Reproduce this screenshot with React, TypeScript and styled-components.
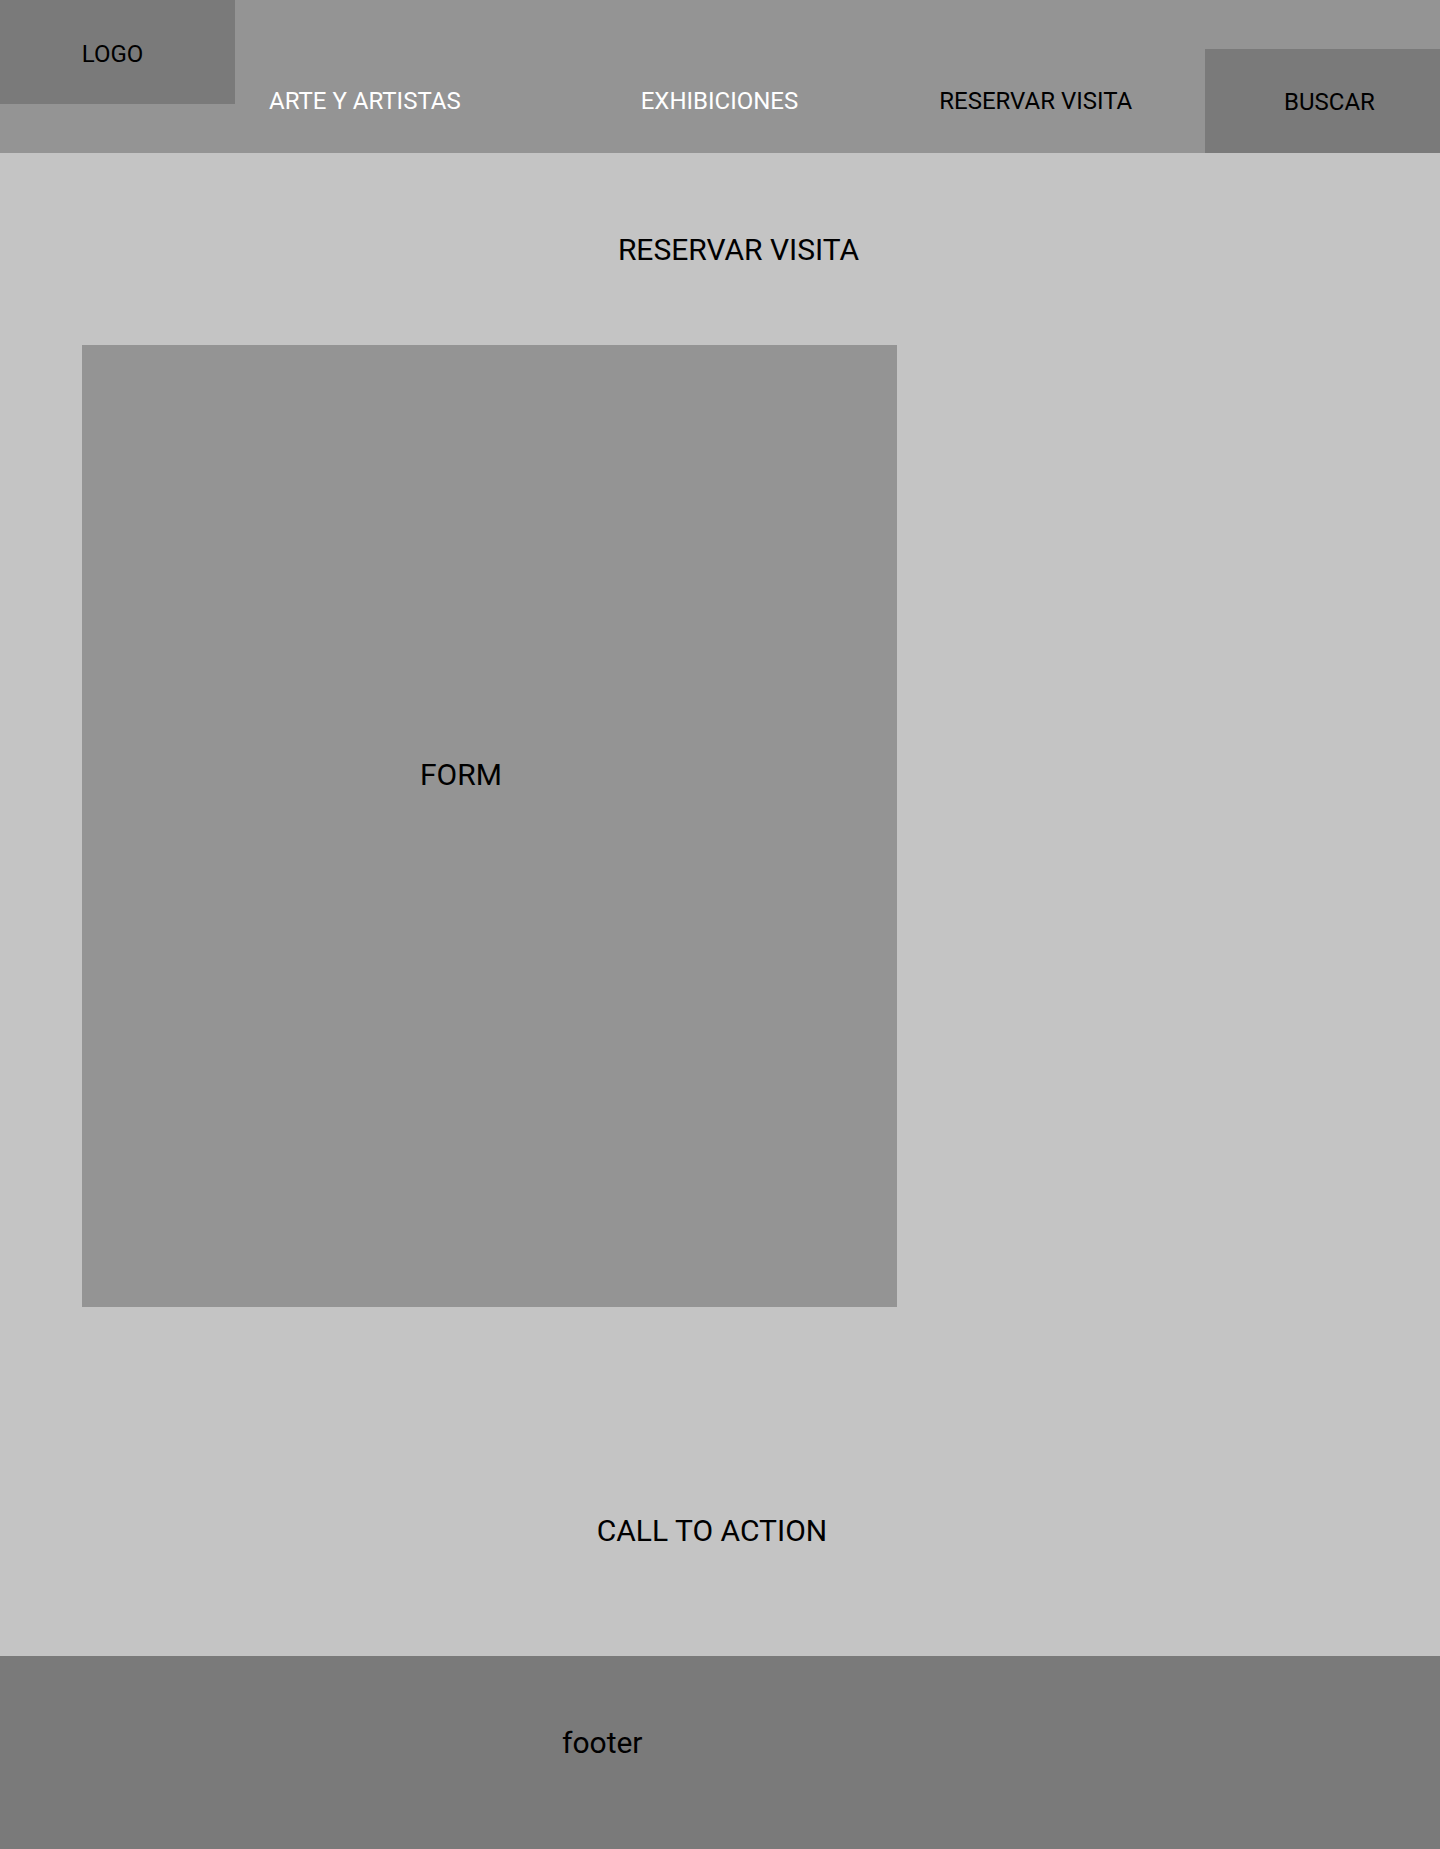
import React from "react";
import styled, { createGlobalStyle } from "styled-components";

const GlobalStyle = createGlobalStyle`
  html, body {
    margin: 0;
    padding: 0;
    background: #c4c4c4;
  }
  body {
    font-family: Roboto, "Liberation Sans", Arial, sans-serif;
    color: #000;
  }
  * { box-sizing: border-box; }
`;

const Page = styled.div`
  display: flex;
  flex-direction: column;
  width: 1440px;
  min-height: 1849px;
`;

const Header = styled.header`
  display: flex;
  align-items: flex-start;
  height: 153px;
  background: #949494;
`;

const LogoBox = styled.div`
  display: flex;
  align-items: center;
  justify-content: center;
  width: 235px;
  height: 104px;
  background: #7a7a7a;
  font-size: 24px;
  color: #000;
  padding-right: 10px;
  padding-top: 3px;
`;

const NavLink = styled.a<{ $offset: number; $light?: boolean }>`
  margin-left: ${(p) => p.$offset}px;
  margin-top: 87px;
  font-size: 24px;
  line-height: 28px;
  white-space: nowrap;
  color: ${(p) => (p.$light ? "#ffffff" : "#000000")};
  text-decoration: none;
  cursor: pointer;
`;

const SearchBox = styled.div`
  display: flex;
  align-items: center;
  justify-content: center;
  margin-left: auto;
  margin-top: 49px;
  width: 235px;
  height: 104px;
  background: #7a7a7a;
  font-size: 24px;
  padding-left: 14px;
  padding-top: 2px;
`;

const Main = styled.main`
  display: flex;
  flex-direction: column;
  height: 1503px;
  background: #c4c4c4;
`;

const Title = styled.h1`
  margin: 79px 0 0;
  padding-left: 37px;
  text-align: center;
  font-size: 30px;
  font-weight: 400;
  line-height: 35px;
`;

const FormPanel = styled.section`
  margin: 78px 0 0 82px;
  width: 815px;
  height: 962px;
  background: #949494;
  padding: 412px 0 0 338px;
  font-size: 30px;
  line-height: 35px;
`;

const CallToAction = styled.div`
  margin-top: 206px;
  padding-right: 16px;
  text-align: center;
  font-size: 30px;
  line-height: 35px;
`;

const Footer = styled.footer`
  height: 193px;
  background: #7a7a7a;
  padding: 69px 0 0 562px;
  font-size: 30px;
  line-height: 35px;
`;

export default function App() {
  return (
    <>
      <GlobalStyle />
      <Page>
        <Header>
          <LogoBox>LOGO</LogoBox>
          <NavLink $offset={34} $light>
            ARTE Y ARTISTAS
          </NavLink>
          <NavLink $offset={180} $light>
            EXHIBICIONES
          </NavLink>
          <NavLink $offset={141}>RESERVAR VISITA</NavLink>
          <SearchBox>BUSCAR</SearchBox>
        </Header>
        <Main>
          <Title>RESERVAR VISITA</Title>
          <FormPanel>FORM</FormPanel>
          <CallToAction>CALL TO ACTION</CallToAction>
        </Main>
        <Footer>footer</Footer>
      </Page>
    </>
  );
}
